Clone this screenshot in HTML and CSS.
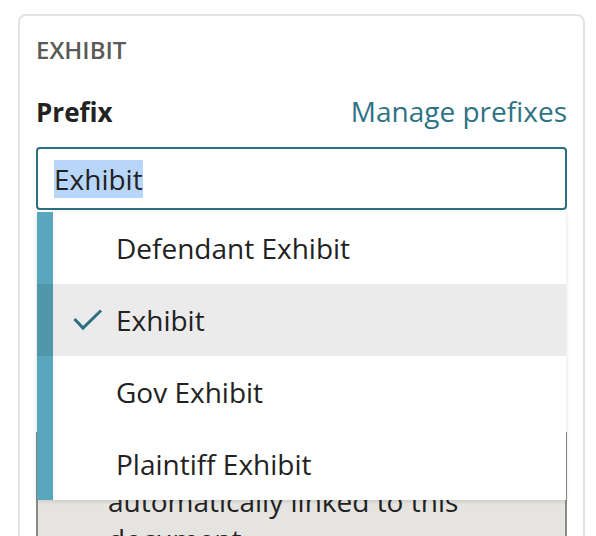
FILE: index.html
```html
<!DOCTYPE html>
<html>
<head>
<meta charset="utf-8">
<link rel="stylesheet" href="styles.css">
</head>
<body>
<div class="card">
  <div class="section-title">EXHIBIT</div>
  <div class="label-row">
    <span class="label">Prefix</span>
    <a class="link">Manage prefixes</a>
  </div>
  <div class="field">
    <div class="input"><span class="sel">Exhibit</span></div>
    <ul class="menu">
      <li class="item">Defendant Exhibit</li>
      <li class="item active">
        <svg class="check" width="30" height="22" viewBox="0 0 30 22"><polyline points="1.5,10 10,19 28,1.5" fill="none" stroke="#2d6e80" stroke-width="3"/></svg>
        Exhibit</li>
      <li class="item">Gov Exhibit</li>
      <li class="item">Plaintiff Exhibit</li>
    </ul>
  </div>
  <div class="note">Exhibits with this prefix will be<br>automatically linked to this<br>document.</div>
</div>
</body>
</html>
```
FILE: styles.css
```css
html, body { margin: 0; padding: 0; background: #fff; overflow: hidden; }
body { font-family: "Open Sans", "Noto Sans", sans-serif; color: #222; }
.card {
  margin: 14px 11px 0 18px;
  border: 2px solid #e3e3df;
  border-radius: 8px;
  padding: 16px 16px 0 16px;
  height: 600px;
  box-sizing: border-box;
}
.section-title {
  font-size: 24px;
  font-weight: 600;
  color: #5a5a56;
  line-height: 32px;
  margin-top: 2px;
}
.label-row {
  display: flex;
  justify-content: space-between;
  align-items: baseline;
  margin-top: 27px;
  line-height: 36px;
}
.label { font-size: 26px; font-weight: 700; color: #222; }
.link { font-size: 28px; color: #2e7385; }
.field { position: relative; margin-top: 17px; }
.input {
  height: 63px;
  box-sizing: border-box;
  border: 2px solid #2b6f81;
  border-radius: 4px;
  padding: 0 0 0 16px;
  display: flex;
  align-items: center;
  font-size: 28px;
}
.sel { background: #b8d6f9; line-height: 38px; }
.menu {
  position: absolute;
  left: 1px;
  right: 1px;
  top: 65px;
  margin: 0;
  padding: 0;
  list-style: none;
  background: #fff;
  box-shadow: 0 1px 4px rgba(0,0,0,0.15);
  z-index: 2;
}
.item {
  height: 72px;
  display: flex;
  align-items: center;
  padding-left: 63px;
  border-left: 16px solid #5aa7bd;
  font-size: 28px;
  position: relative;
}
.item.active { background: #ebebeb; border-left-color: #5097aa; }
.check { position: absolute; left: 20px; top: 25px; }
.note {
  margin-top: 222px;
  background: #e5e4e0;
  border-left: 2px solid #8a8a87;
  border-right: 2px solid #8a8a87;
  padding: 12px 0 20px 70px;
  font-size: 28px;
  line-height: 38px;
}
```
